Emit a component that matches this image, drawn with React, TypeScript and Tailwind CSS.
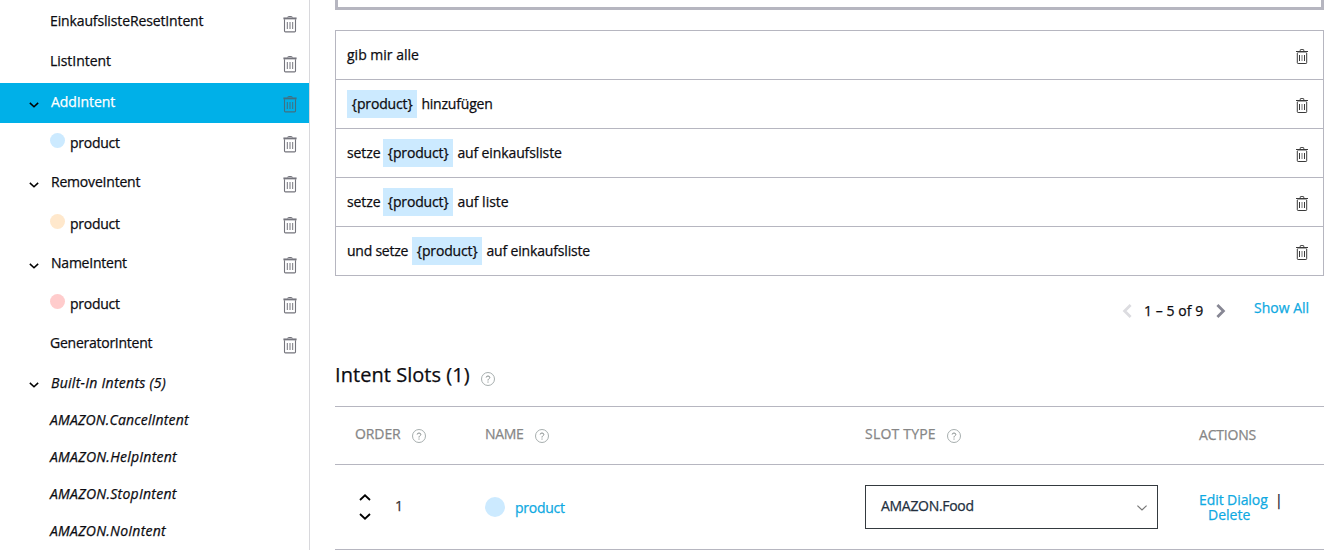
import React from 'react';
import clsx from 'clsx';

type SidebarItem = {
  label: string;
  row: string;
  text: string;
  kind: 'intent' | 'group' | 'slot';
  dot?: string;
  active?: boolean;
};

const sidebarItems: SidebarItem[] = [
  { label: 'EinkaufslisteResetIntent', kind: 'intent', row: 'h-10', text: 'pt-2 tracking-[-0.13px]' },
  { label: 'ListIntent', kind: 'intent', row: 'h-10', text: 'pt-2 tracking-[-0.05px]' },
  { label: 'AddIntent', kind: 'group', row: 'h-10', text: 'pt-[9px] tracking-[-0.08px]', active: true },
  { label: 'product', kind: 'slot', row: 'h-10', text: 'pt-[10px] tracking-[-0.25px]', dot: 'bg-[#cceaff]' },
  { label: 'RemoveIntent', kind: 'group', row: 'h-[41px]', text: 'pt-[9px] tracking-[-0.2px]' },
  { label: 'product', kind: 'slot', row: 'h-10', text: 'pt-[10px] tracking-[-0.25px]', dot: 'bg-[#ffe8cc]' },
  { label: 'NameIntent', kind: 'group', row: 'h-10', text: 'pt-[9px] tracking-[-0.22px]' },
  { label: 'product', kind: 'slot', row: 'h-10', text: 'pt-[10px] tracking-[-0.25px]', dot: 'bg-[#ffcccc]' },
  { label: 'GeneratorIntent', kind: 'intent', row: 'h-[41px]', text: 'pt-[9px] tracking-[-0.25px]' },
];

const builtInIntents = [
  { label: 'AMAZON.CancelIntent', text: 'tracking-[0.17px]' },
  { label: 'AMAZON.HelpIntent', text: 'tracking-[0.26px]' },
  { label: 'AMAZON.StopIntent', text: 'tracking-[0.27px]' },
  { label: 'AMAZON.NoIntent', text: 'tracking-[0.25px]' },
];

const utterances = [
  { before: 'gib mir alle', slot: false, after: '', beforeText: '', afterText: '' },
  { before: '', slot: true, after: 'hinzufügen', beforeText: '', afterText: 'tracking-[-0.2px]' },
  { before: 'setze', slot: true, after: 'auf einkaufsliste', beforeText: 'w-9 tracking-[-0.1px]', afterText: 'tracking-[-0.12px]' },
  { before: 'setze', slot: true, after: 'auf liste', beforeText: 'w-9 tracking-[-0.1px]', afterText: '' },
  { before: 'und setze', slot: true, after: 'auf einkaufsliste', beforeText: 'w-[65px] tracking-[-0.24px]', afterText: 'tracking-[-0.16px]' },
];

function TrashIcon({ className }: { className?: string }) {
  return (
    <svg viewBox="0 0 14 17" className={clsx('shrink-0', className)} fill="none" stroke="currentColor">
      <path d="M4.8 1.6V1.1Q4.8 0.5 5.4 0.5H8.6Q9.2 0.5 9.2 1.1V1.6" />
      <path d="M0.4 2.4H13.6" strokeWidth="1.9" />
      <path d="M1.5 3.3V15Q1.5 15.9 2.4 15.9H11.6Q12.5 15.9 12.5 15V3.3" strokeWidth="1.1" />
      <path d="M4.3 6V13M7 6V13M9.7 6V13" />
    </svg>
  );
}

function SmallTrashIcon() {
  return (
    <svg viewBox="0 0 12 15" className="mt-[2px] h-[15px] w-3 shrink-0" fill="none" stroke="#3a3a3a">
      <path d="M4.2 2V1Q4.2 0.5 4.7 0.5H7.3Q7.8 0.5 7.8 1V2" strokeWidth="0.9" />
      <path d="M0 2.5H12" />
      <path d="M1 3.5H11" stroke="#aaaaaa" />
      <path d="M1.3 4V13.7Q1.3 14.5 2.1 14.5H9.9Q10.7 14.5 10.7 13.7V4" />
      <path d="M3.5 6V12M8.5 6V12" />
      <path d="M6 6V12" stroke="#777777" />
    </svg>
  );
}

function Chevron({ className, up }: { className?: string; up?: boolean }) {
  return (
    <svg viewBox="0 0 12 7" className={clsx('shrink-0', className)} fill="none" stroke="currentColor" strokeWidth="1.8">
      <path d={up ? 'M1 6L6 1.3L11 6' : 'M1 1L6 5.7L11 1'} />
    </svg>
  );
}

function PageArrow({ className, left }: { className?: string; left?: boolean }) {
  return (
    <svg viewBox="0 0 10 14" className={clsx('h-[14px] w-[10px] shrink-0', className)} fill="none" stroke="currentColor" strokeWidth="2.8">
      <path d={left ? 'M8.6 1L2.6 7L8.6 13' : 'M1.4 1L7.4 7L1.4 13'} />
    </svg>
  );
}

function HelpIcon({ className }: { className?: string }) {
  return (
    <svg viewBox="0 0 14 14" className={clsx('h-[14px] w-[14px] shrink-0', className)} fill="none">
      <circle cx="7" cy="7" r="6.5" stroke="#9da5a5" strokeWidth="0.9" />
      <path d="M5.2 5.5Q5.3 4 7 4T8.8 5.5C8.8 6.7 7 6.7 7 8.5" stroke="#848c8c" strokeWidth="1" />
      <path d="M7 9.5V10.6" stroke="#848c8c" strokeWidth="1" />
    </svg>
  );
}

function SidebarRow({ item }: { item: SidebarItem }) {
  return (
    <li className={clsx('flex items-start', item.row, item.active && 'bg-[#00b0e8]')}>
      <div className="flex w-[50px] shrink-0 justify-end pt-[19px] pr-[11px]">
        {item.kind === 'group' && <Chevron className="h-[6px] w-[10px] text-black" />}
      </div>
      {item.kind === 'slot' && <span className={clsx('mt-[10px] mr-[5px] h-[15px] w-[15px] shrink-0 rounded-full', item.dot)} />}
      <span className={clsx('flex-1', item.text, item.kind === 'group' && 'pl-px', item.active && 'text-white')}>{item.label}</span>
      <TrashIcon className={clsx('mt-[13px] mr-3 h-[17px] w-[14px]', item.active ? 'text-[#426f80]' : 'text-[#74747c]')} />
    </li>
  );
}

function Sidebar() {
  return (
    <nav className="w-[310px] shrink-0 border-r border-[#d8d8dc] pt-[3px]">
      <ul>
        {sidebarItems.map((item, i) => (
          <SidebarRow key={i} item={item} />
        ))}
        <li className="flex h-[37px] items-start italic">
          <div className="flex w-[50px] shrink-0 justify-end pt-[17px] pr-[11px]">
            <Chevron className="h-[6px] w-[10px] text-black" />
          </div>
          <span className="pt-2 pl-px tracking-[0.28px]">Built-In Intents (5)</span>
        </li>
        {builtInIntents.map((intent) => (
          <li key={intent.label} className={clsx('h-[37px] pt-2 pl-[50px] italic', intent.text)}>
            {intent.label}
          </li>
        ))}
      </ul>
    </nav>
  );
}

function Utterances() {
  return (
    <ul className="mt-5 border border-b-0 border-[#b6b6c0]">
      {utterances.map((u, i) => (
        <li key={i} className="flex h-[49px] items-center border-b border-[#b6b6c0] pr-[15px] pl-[11px]">
          {u.before && <span className={clsx('shrink-0', u.beforeText)}>{u.before}</span>}
          {u.slot && (
            <span className="mr-1 flex h-7 w-[70.4px] shrink-0 items-center justify-center bg-[#cceaff] tracking-[-0.15px]">
              {'{product}'}
            </span>
          )}
          <span className={clsx('flex-1', u.afterText)}>{u.after}</span>
          <SmallTrashIcon />
        </li>
      ))}
    </ul>
  );
}

function Pager() {
  return (
    <div className="mt-[22px] flex h-6 items-start justify-end pr-[14px]">
      <PageArrow left className="mt-[6px] text-[#dcdce0]" />
      <span className="mt-[3px] ml-3 w-[72px] tracking-[0.05px]">1 – 5 of 9</span>
      <PageArrow className="mt-[6px] text-[#878794]" />
      <a className="ml-[28px] w-[56px] whitespace-nowrap text-[#0ea9e2]">Show All</a>
    </div>
  );
}

function SlotTable() {
  return (
    <section className="mt-[38px]">
      <h2 className="flex h-[46px] items-start text-[20px] leading-[30px]">
        <span className="w-[136px] whitespace-nowrap tracking-[0.05px]">Intent Slots (1)</span>
        <HelpIcon className="mt-3 ml-[10px]" />
      </h2>
      <div className="grid h-[58px] grid-cols-[150px_380px_333px_1fr] items-start border-t border-[#b6b6c0] text-[#868686]">
        <div className="flex pt-[17px] pl-5">
          <span className="w-[57px] tracking-[-0.1px]">ORDER</span>
          <HelpIcon className="mt-[5px]" />
        </div>
        <div className="flex pt-[17px]">
          <span className="w-[50px] tracking-[-0.3px]">NAME</span>
          <HelpIcon className="mt-[5px]" />
        </div>
        <div className="flex pt-[17px]">
          <span className="w-[82px] tracking-[0.2px]">SLOT TYPE</span>
          <HelpIcon className="mt-[5px]" />
        </div>
        <span className="pt-[18px] pl-px tracking-[-0.2px]">ACTIONS</span>
      </div>
      <div className="grid h-[86px] grid-cols-[150px_380px_333px_1fr] items-start border-y border-[#b6b6c0]">
        <div className="flex items-start pl-6">
          <div className="flex flex-col gap-[12px] pt-[29px]">
            <Chevron up className="h-[7px] w-3 text-black" />
            <Chevron className="h-[7px] w-3 text-black" />
          </div>
          <span className="mt-[31px] ml-6 text-[#333333]">1</span>
        </div>
        <div className="flex items-start">
          <span className="mt-8 h-5 w-5 rounded-full bg-[#cceaff]" />
          <a className="mt-[33px] ml-[10px] text-[#0ea9e2] tracking-[-0.25px]">product</a>
        </div>
        <div className="mt-5 flex h-11 w-[293px] items-start justify-between border border-[#343a3f] pr-[10px] pl-[15px] text-[#232f3e]">
          <span className="mt-[10px] tracking-[-0.3px]">AMAZON.Food</span>
          <svg viewBox="0 0 10 6" className="mt-[19px] h-[6px] w-[10px]" fill="none" stroke="#777777" strokeWidth="1.2">
            <path d="M0.4 0.6L5 5L9.6 0.6" />
          </svg>
        </div>
        <div className="flex flex-col items-start pt-[27px] pl-px leading-[15px] text-[#0ea9e2]">
          <div className="flex items-start">
            <a className="w-[76px] tracking-[-0.08px]">Edit Dialog</a>
            <span className="text-[#22222a]">|</span>
          </div>
          <a className="pl-[9px]">Delete</a>
        </div>
      </div>
    </section>
  );
}

export default function App() {
  return (
    <div className="flex h-[550px] w-full overflow-hidden bg-white font-['Open_Sans',sans-serif] text-[14px] leading-5 text-[#0c0c11] [-webkit-text-stroke:0.25px_currentColor]">
      <Sidebar />
      <main className="ml-[25px] w-[989px] shrink-0">
        <div className="h-[10px] border-x-[3px] border-b-[3px] border-[#b6b6c0]" />
        <Utterances />
        <Pager />
        <SlotTable />
      </main>
    </div>
  );
}
